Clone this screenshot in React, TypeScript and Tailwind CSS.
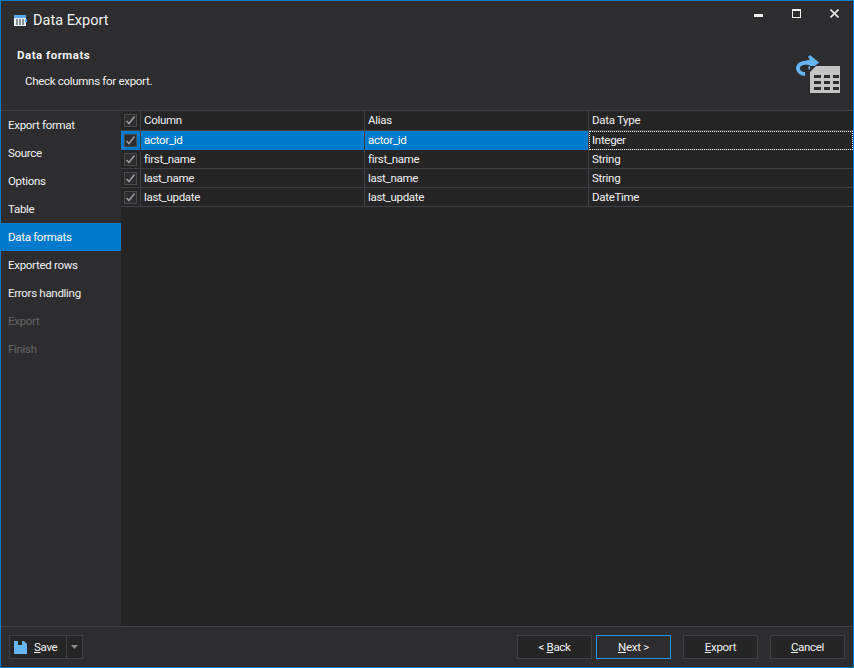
import React from "react";

const NAV = [
  { label: "Export format" },
  { label: "Source" },
  { label: "Options" },
  { label: "Table" },
  { label: "Data formats", active: true },
  { label: "Exported rows" },
  { label: "Errors handling" },
  { label: "Export", disabled: true },
  { label: "Finish", disabled: true },
];

const ROWS = [
  ["actor_id", "actor_id", "Integer"],
  ["first_name", "first_name", "String"],
  ["last_name", "last_name", "String"],
  ["last_update", "last_update", "DateTime"],
];

function Check() {
  return (
    <span className="w-[13px] h-[13px] border border-[#4a4a4d] bg-[#2d2d30] flex items-center justify-center">
      <svg width="11" height="11" viewBox="0 0 11 11">
        <path d="M1.5 6 L4 8.5 L9.5 1.5" fill="none" stroke="#999999" strokeWidth="1.6" />
      </svg>
    </span>
  );
}

function Btn({ pre, u, post, focus }: { pre?: string; u: string; post: string; focus?: boolean }) {
  return (
    <button
      className={`w-[75px] h-[24px] pt-[1px] flex items-center justify-center border text-[#f1f1f1] whitespace-pre ${
        focus ? "border-[#1c97ea] bg-[#2d2d30]" : "border-[#3f3f46] bg-[#252526]"
      }`}
    >
      {pre}
      <span className="underline">{u}</span>
      {post}
    </button>
  );
}

export default function App() {
  return (
    <div className="w-[854px] h-[668px] flex flex-col border border-[#007acc] bg-[#2d2d30] text-[#f1f1f1] text-[11.5px] tracking-[-0.3px] font-['Roboto',sans-serif] overflow-hidden relative">
      {/* Header */}
      <div className="h-[110px] shrink-0 border-b border-[#3f3f46] relative">
        <div className="flex items-center h-[38px] pl-[13px] gap-[6px]">
          <svg width="13" height="11" viewBox="0 0 13 11">
            <rect x="0" y="0" width="12" height="11" fill="#e8eef5" />
            <rect x="0" y="0" width="12" height="3" fill="#5aa9f0" />
            <path d="M2 4.5h2v1H2zM5 4.5h2v1H5zM8 4.5h2v1H8zM2 6.5h2v1H2zM5 6.5h2v1H5zM8 6.5h2v1H8zM2 8.5h2v1H2zM5 8.5h2v1H5zM8 8.5h2v1H8z" fill="#2d2d30" />
            <rect x="11" y="4" width="2" height="3" fill="#5aa9f0" />
          </svg>
          <span className="text-[14.5px] pt-[1px] tracking-normal text-[#f1f1f1]">Data Export</span>
        </div>
        <div className="pl-[16px] mt-[7px] font-bold tracking-[0.5px] leading-[18px]">Data formats</div>
        <div className="pl-[24px] mt-[8px] leading-[18px]">Check columns for export.</div>

        {/* window buttons */}
        <div className="absolute top-[8px] right-[0px] flex items-start">
          <div className="w-[38px] h-[12px] flex justify-center pt-[5px]">
            <span className="w-[9px] h-[3px] bg-[#f1f1f1] block" />
          </div>
          <div className="w-[38px] h-[12px] flex justify-center">
            <span className="w-[9px] h-[9px] border border-[#f1f1f1] border-t-2 block" />
          </div>
          <div className="w-[38px] h-[12px] flex justify-center">
            <svg width="9" height="9" viewBox="0 0 9 9">
              <path d="M0.5 0.5 L8.5 8.5 M8.5 0.5 L0.5 8.5" stroke="#e8e8e8" strokeWidth="1.6" />
            </svg>
          </div>
        </div>

        {/* large export icon */}
        <svg className="absolute left-[795px] top-[53px]" width="46" height="42" viewBox="0 0 46 42">
          <path d="M9 20 C5 20 2 17.5 2 14.5 C2 11 5 8.5 12 8.5 L16 8.5" fill="none" stroke="#66b5f8" strokeWidth="3.8" />
          <path d="M14 1 L23 8.5 L14 16 L12 14 L14 11 L11 11 L11 6 L14 6 L12 3 Z" fill="#66b5f8" />
          <rect x="14" y="12" width="30" height="27" fill="#c4c4c4" />
          <path d="M18 21h7v3h-7zM28 21h6v3h-6zM37 21h6v3h-6zM18 27h7v3h-7zM28 27h6v3h-6zM37 27h6v3h-6zM18 33h7v3h-7zM28 33h6v3h-6zM37 33h6v3h-6z" fill="#2d2d30" />
          <path d="M14 12 L20 12 L14 18 Z" fill="#2d2d30" />
        </svg>
      </div>

      {/* Body */}
      <div className="flex flex-1 min-h-0">
        <nav className="w-[120px] shrink-0">
          {NAV.map((n) => (
            <div
              key={n.label}
              className={`h-[28px] pt-[1px] flex items-center pl-[7px] ${
                n.active ? "bg-[#007acc] text-white" : n.disabled ? "text-[#656565]" : "text-[#f1f1f1]"
              }`}
            >
              {n.label}
            </div>
          ))}
        </nav>
        <div className="flex-1 min-w-0 bg-[#252526]">
          <div className="grid grid-cols-[20px_224px_224px_1fr] h-[20px] border-b border-[#3f3f46] text-[#f1f1f1]">
            <div className="flex items-center justify-center border-r border-[#3f3f46]">
              <Check />
            </div>
            <div className="flex items-center pl-[3px] border-r border-[#3f3f46]">Column</div>
            <div className="flex items-center pl-[3px] border-r border-[#3f3f46]">Alias</div>
            <div className="flex items-center pl-[3px]">Data Type</div>
          </div>
          {ROWS.map((r, i) => (
            <div key={r[0]} className="grid grid-cols-[20px_224px_224px_1fr] h-[19px] border-b border-[#3f3f46]">
              <div className={`flex items-center justify-center border-r border-[#3f3f46] ${i === 0 ? "bg-[#007acc]" : ""}`}>
                <Check />
              </div>
              <div className={`flex items-center pl-[3px] border-r border-[#3f3f46] ${i === 0 ? "bg-[#007acc] text-white" : "pt-[1px]"}`}>
                {r[0]}
              </div>
              <div className={`flex items-center pl-[3px] border-r border-[#3f3f46] ${i === 0 ? "bg-[#007acc] text-white" : "pt-[1px]"}`}>
                {r[1]}
              </div>
              <div className={`flex items-center ${i === 0 ? "pl-[2px] border border-dotted border-white" : "pl-[3px] pt-[1px]"}`}>
                {r[2]}
              </div>
            </div>
          ))}
        </div>
      </div>

      {/* Footer */}
      <div className="h-[41px] shrink-0 border-t border-[#3f3f46] flex items-center pl-[8px] pr-[8px]">
        <div className="flex h-[24px]">
          <button className="w-[58px] border border-[#3f3f46] bg-[#252526] flex items-center pl-[4px] gap-[7px]">
            <svg width="13" height="13" viewBox="0 0 13 13">
              <path d="M0 0 H10 L13 3 V13 H0 Z" fill="#66b5f8" />
              <rect x="4" y="0" width="4" height="4" fill="#252526" />
            </svg>
            <span className="pt-[1px]">
              <span className="underline">S</span>ave
            </span>
          </button>
          <button className="w-[16px] border border-l-0 border-[#3f3f46] bg-[#252526] flex items-center justify-center">
            <svg width="7" height="4" viewBox="0 0 7 4">
              <path d="M0 0 H7 L3.5 4 Z" fill="#8a8a8a" />
            </svg>
          </button>
        </div>
        <div className="ml-auto flex">
          <Btn pre="< " u="B" post="ack" />
          <div className="ml-[4px]">
            <Btn u="N" post="ext >" focus />
          </div>
          <div className="ml-[12px]">
            <Btn u="E" post="xport" />
          </div>
          <div className="ml-[12px]">
            <Btn u="C" post="ancel" />
          </div>
        </div>
      </div>
    </div>
  );
}
